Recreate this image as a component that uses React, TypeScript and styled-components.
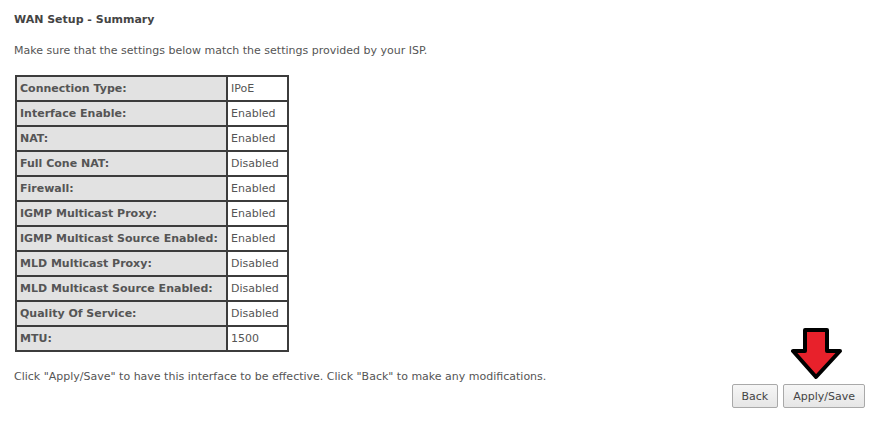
import React from 'react'
import styled, { createGlobalStyle } from 'styled-components'

const GlobalStyle = createGlobalStyle`
  body {
    margin: 0;
    background: #ffffff;
    font-family: "DejaVu Sans", Tahoma, sans-serif;
    color: #555555;
  }
`

const Page = styled.div`
  position: relative;
  width: 891px;
  height: 425px;
  padding: 13px 26px 0 14px;
  box-sizing: border-box;
  font-size: 11px;
`

const Title = styled.div`
  font-weight: bold;
  font-size: 11px;
  color: #444444;
  height: 15px;
`

const Intro = styled.p`
  margin: 16px 0 0 0;
  line-height: 14px;
`

const SummaryTable = styled.table`
  margin: 17px 0 0 1px;
  border: 1px solid #3c3c3c;
  border-spacing: 0;
  border-collapse: separate;
`

const Cell = styled.td<{ $head?: boolean }>`
  border: 1px solid #3c3c3c;
  height: 25px;
  padding: 0 3px 0 3px;
  box-sizing: border-box;
  background: ${(p) => (p.$head ? '#e2e2e2' : '#ffffff')};
  font-weight: ${(p) => (p.$head ? 'bold' : 'normal')};
  width: ${(p) => (p.$head ? '211px' : '61px')};
  white-space: nowrap;
`

const Footer = styled.p`
  margin: 18px 0 0 0;
  line-height: 14px;
`

const Actions = styled.div`
  display: flex;
  justify-content: flex-end;
  gap: 5px;
  margin-top: 0;
`

const Button = styled.button`
  height: 24px;
  padding: 0 9px;
  font-family: "DejaVu Sans", Tahoma, sans-serif;
  font-size: 11px;
  color: #444444;
  background: linear-gradient(#f6f6f6, #e6e6e6);
  border: 1px solid #a9a9a9;
  border-radius: 2px;
`

const Arrow = styled.svg`
  position: absolute;
  left: 791px;
  top: 327px;
`

const rows: [string, string][] = [
  ['Connection Type:', 'IPoE'],
  ['Interface Enable:', 'Enabled'],
  ['NAT:', 'Enabled'],
  ['Full Cone NAT:', 'Disabled'],
  ['Firewall:', 'Enabled'],
  ['IGMP Multicast Proxy:', 'Enabled'],
  ['IGMP Multicast Source Enabled:', 'Enabled'],
  ['MLD Multicast Proxy:', 'Disabled'],
  ['MLD Multicast Source Enabled:', 'Disabled'],
  ['Quality Of Service:', 'Disabled'],
  ['MTU:', '1500'],
]

export default function App() {
  return (
    <Page>
      <GlobalStyle />
      <Title>WAN Setup - Summary</Title>
      <Intro>Make sure that the settings below match the settings provided by your ISP.</Intro>
      <SummaryTable>
        <tbody>
          {rows.map(([label, value]) => (
            <tr key={label}>
              <Cell $head>{label}</Cell>
              <Cell>{value}</Cell>
            </tr>
          ))}
        </tbody>
      </SummaryTable>
      <Footer>
        Click "Apply/Save" to have this interface to be effective. Click "Back" to make any
        modifications.
      </Footer>
      <Actions>
        <Button>Back</Button>
        <Button>Apply/Save</Button>
      </Actions>
      <Arrow width="52" height="54" viewBox="0 0 52 54">
        <path
          d="M14 3 H36 V24 H49 L25 50 L2 24 H14 Z"
          fill="#e8212b"
          stroke="#000"
          strokeWidth="4"
          strokeLinejoin="round"
        />
      </Arrow>
    </Page>
  )
}
